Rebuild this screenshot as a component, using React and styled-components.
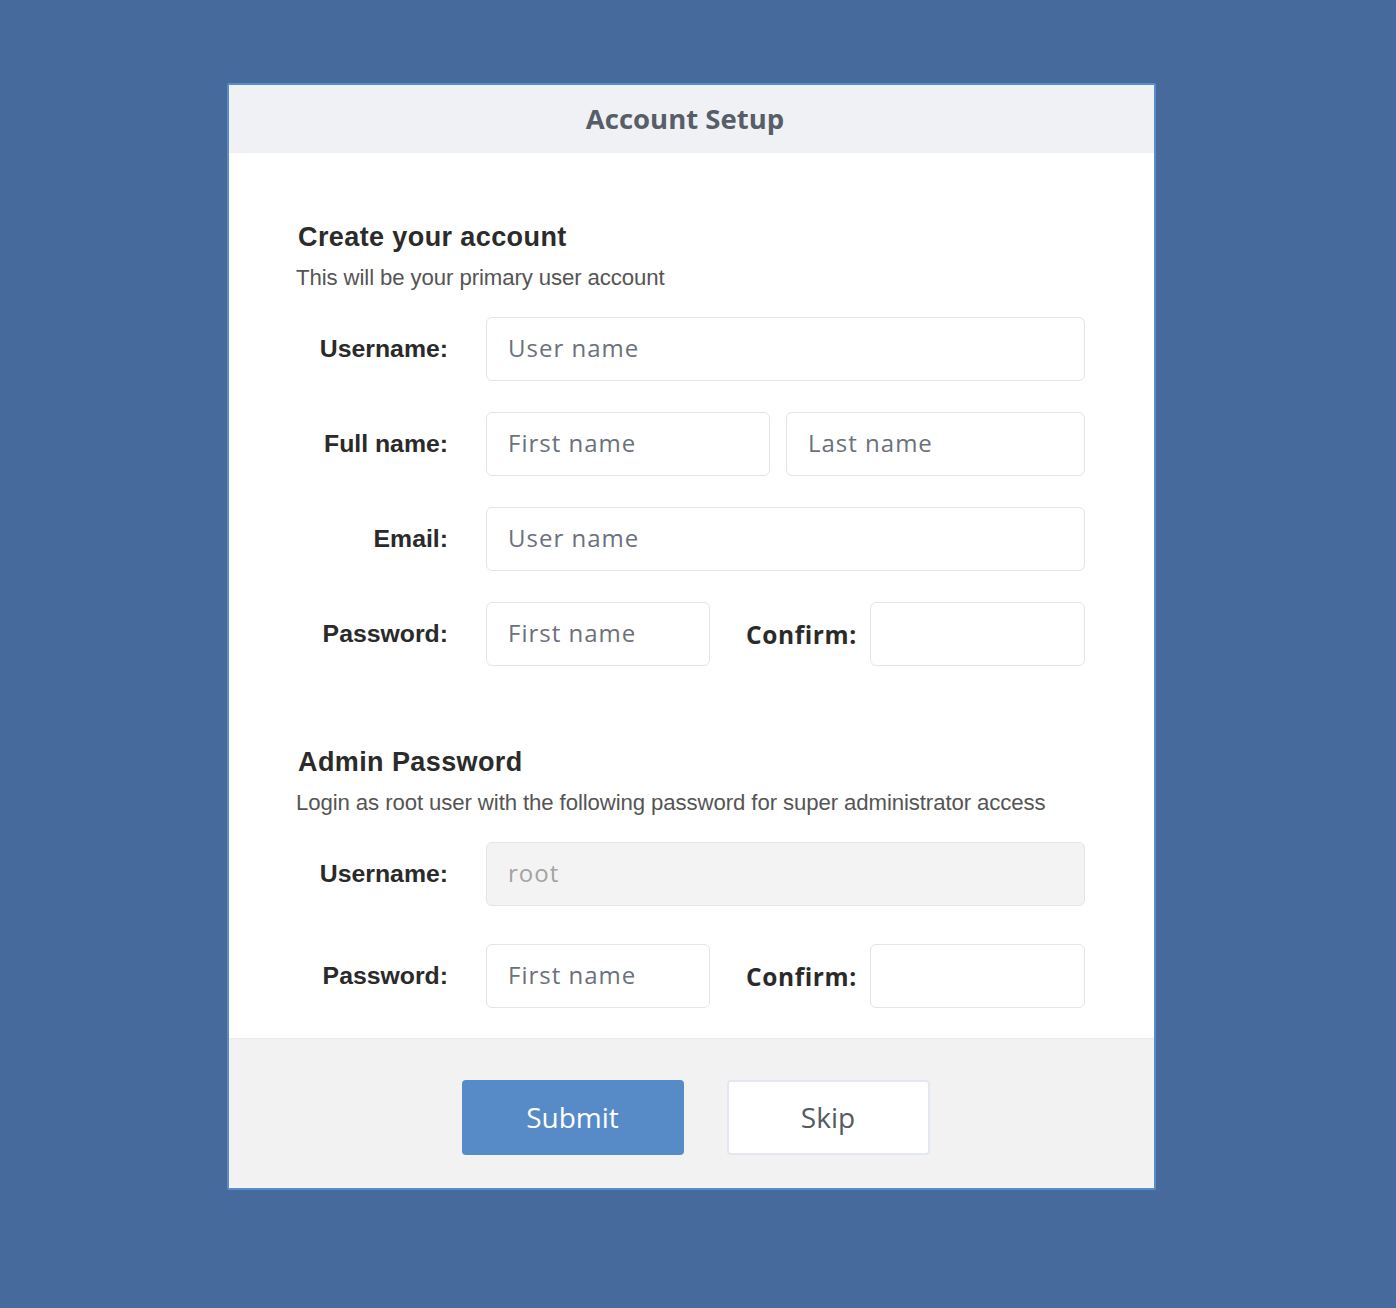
import React from "react";
import styled, { createGlobalStyle } from "styled-components";

const GlobalStyle = createGlobalStyle`
  html, body {
    margin: 0;
    padding: 0;
    background: #466a9c;
  }
`;

const Page = styled.div`
  min-height: 1308px;
  padding: 83px 0 0 227px;
  box-sizing: border-box;
  background: #466a9c;
`;

const Card = styled.div`
  width: 929px;
  box-sizing: border-box;
  border: 2px solid #5b8cca;
  border-radius: 2px;
  background: #ffffff;
  overflow: hidden;
`;

const Header = styled.div`
  height: 68px;
  display: flex;
  align-items: center;
  justify-content: center;
  padding-right: 13px;
  padding-bottom: 2px;
  box-sizing: border-box;
  background: #eff1f4;

  font-family: "Open Sans", sans-serif;
  font-weight: 700;
  font-size: 27.5px;
  color: #575e69;
`;

const Body = styled.div`
  padding: 69px 69px 30px 67px;
`;

const Section = styled.div`
  margin-top: ${props => props.top || 0}px;
`;

const Title = styled.h2`
  margin: 0;
  padding-left: 2px;
  font-family: "Liberation Sans", Arial, sans-serif;
  font-weight: 700;
  font-size: 27px;
  letter-spacing: 0.4px;
  line-height: 30px;
  color: #2b2b2b;
`;

const Subtitle = styled.p`
  margin: 14px 0 0;
  font-family: "Liberation Sans", Arial, sans-serif;
  font-size: 22.2px;
  line-height: 24px;
  color: #555555;
  letter-spacing: -0.1px;
`;

const Rows = styled.div`
  display: flex;
  flex-direction: column;
  gap: ${props => props.gap}px;
  margin-top: ${props => props.top}px;
`;

const Row = styled.div`
  display: flex;
  align-items: center;
  height: 64px;
`;

const Label = styled.label`
  width: 152px;
  flex: none;
  margin-right: 38px;
  text-align: right;
  font-family: "Liberation Sans", Arial, sans-serif;
  font-weight: 700;
  font-size: 24.8px;
  color: #2a2a2a;
`;

const InlineLabel = styled.label`
  flex: none;
  margin: 0 13px 0 36px;
  font-family: "Open Sans", sans-serif;
  font-weight: 700;
  font-size: 24.5px;
  letter-spacing: 0.6px;
  color: #2a2a2a;
`;

const Input = styled.div`
  box-sizing: border-box;
  height: 64px;
  width: ${props => (props.w ? props.w + "px" : "auto")};
  flex: ${props => (props.w ? "none" : "1")};
  margin-left: ${props => props.ml || 0}px;
  display: flex;
  align-items: center;
  padding: 0 0 3px 21px;
  border: 1px solid #e1e5ec;
  border-radius: 6px;
  background: ${props => (props.disabled ? "#f3f3f3" : "#ffffff")};

  font-family: "Open Sans", sans-serif;
  font-size: 24px;
  letter-spacing: 1px;
  color: ${props => (props.disabled ? "#a3a3a3" : "#6b717c")};
`;

const Footer = styled.div`
  display: flex;
  justify-content: center;
  gap: 43px;
  padding: 41px 0 33px 8px;
  background: #f2f2f2;
  border-top: 1px solid #ebebeb;
`;

const Button = styled.button`
  box-sizing: border-box;
  width: ${props => props.w}px;
  height: 75px;
  padding-bottom: 3px;
  border-radius: 4px;
  border: 2px solid ${props => (props.primary ? "#578bc8" : "#e3e8ef")};
  background: ${props => (props.primary ? "#578bc8" : "#ffffff")};
  color: ${props => (props.primary ? "#ffffff" : "#555b63")};
  font-family: "Open Sans", sans-serif;
  font-size: 28px;
  cursor: pointer;
`;

const App = () => {
  return (
    <Page>
      <GlobalStyle />
      <Card>
        <Header>Account Setup</Header>
        <Body>
          <Section>
            <Title>Create your account</Title>
            <Subtitle>This will be your primary user account</Subtitle>
            <Rows top={27} gap={31}>
              <Row>
                <Label>Username:</Label>
                <Input>User name</Input>
              </Row>
              <Row>
                <Label>Full name:</Label>
                <Input w={284}>First name</Input>
                <Input ml={16}>Last name</Input>
              </Row>
              <Row>
                <Label>Email:</Label>
                <Input>User name</Input>
              </Row>
              <Row>
                <Label>Password:</Label>
                <Input w={224}>First name</Input>
                <InlineLabel>Confirm:</InlineLabel>
                <Input />
              </Row>
            </Rows>
          </Section>
          <Section top={81}>
            <Title>Admin Password</Title>
            <Subtitle>
              Login as root user with the following password for super administrator access
            </Subtitle>
            <Rows top={27} gap={38}>
              <Row>
                <Label>Username:</Label>
                <Input disabled>root</Input>
              </Row>
              <Row>
                <Label>Password:</Label>
                <Input w={224}>First name</Input>
                <InlineLabel>Confirm:</InlineLabel>
                <Input />
              </Row>
            </Rows>
          </Section>
        </Body>
        <Footer>
          <Button primary w={222}>Submit</Button>
          <Button w={203}>Skip</Button>
        </Footer>
      </Card>
    </Page>
  );
};

export default App;
